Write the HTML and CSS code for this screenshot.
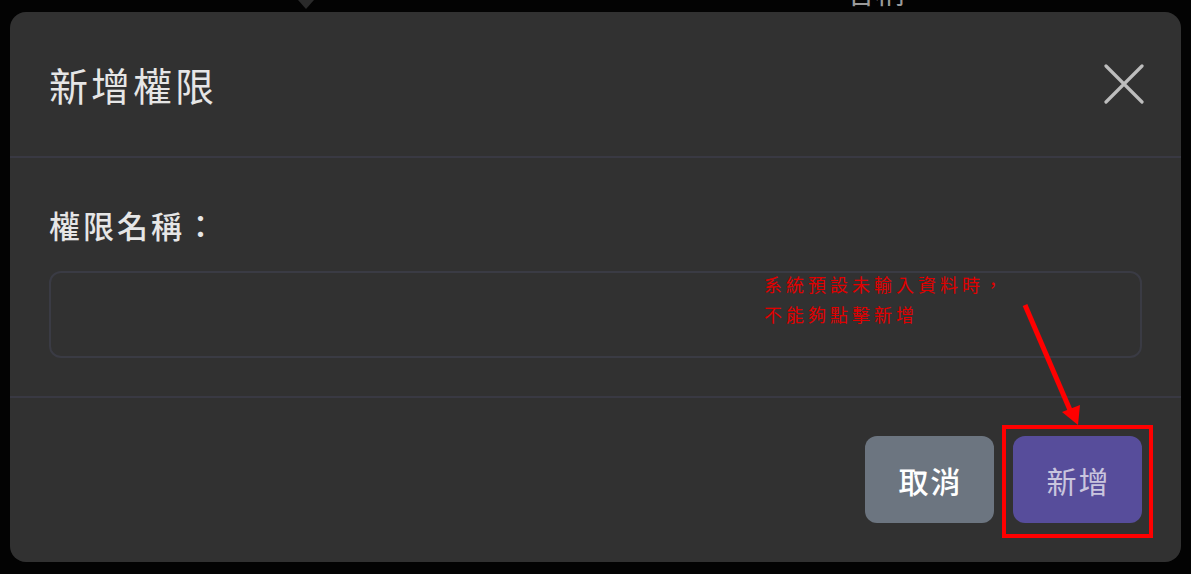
FILE: index.html
```html
<!DOCTYPE html>
<html lang="zh-Hant">
<head>
<meta charset="utf-8">
<title>新增權限</title>
<link rel="stylesheet" href="styles.css">
</head>
<body>
<div class="behind">
  <span class="behind-caret"></span>
  <span class="behind-text">名稱</span>
</div>
<div class="modal">
  <div class="modal-header">
    <h1 class="modal-title">新增權限</h1>
    <button class="close-btn" aria-label="close">
      <svg width="40" height="40" viewBox="0 0 40 40"><path d="M2 2 L38 38 M38 2 L2 38" stroke="#bdbdbd" stroke-width="3.2" stroke-linecap="round" fill="none"/></svg>
    </button>
  </div>
  <div class="modal-body">
    <label class="field-label">權限名稱：</label>
    <div class="field-input"></div>
  </div>
  <div class="modal-footer">
    <button class="btn btn-cancel">取消</button>
    <button class="btn btn-add">新增</button>
  </div>
</div>
<div class="note">系統預設未輸入資料時，<br>不能夠點擊新增</div>
<svg class="arrow" width="1191" height="574" viewBox="0 0 1191 574">
  <line x1="1025" y1="305" x2="1070" y2="410" stroke="#ff0000" stroke-width="5"/>
  <polygon points="1062,412 1080,405 1078,425" fill="#ff0000"/>
</svg>
</body>
</html>
```
FILE: styles.css
```css
html, body {
  margin: 0;
  padding: 0;
}
body {
  background: #030303;
  width: 1191px;
  height: 574px;
  overflow: hidden;
  position: relative;
  font-family: "Noto Sans CJK TC", "Noto Sans", sans-serif;
  padding: 12px 10px;
  box-sizing: border-box;
}
.behind {
  position: absolute;
  top: 0;
  left: 0;
  width: 1191px;
  height: 12px;
  overflow: hidden;
}
.behind-caret {
  position: absolute;
  left: 298px;
  top: 0;
  width: 0;
  height: 0;
  border-left: 8px solid transparent;
  border-right: 8px solid transparent;
  border-top: 9px solid #2a2a2a;
}
.behind-text {
  position: absolute;
  left: 843px;
  top: -30px;
  font-size: 30px;
  line-height: 40px;
  color: #9a9a9a;
  letter-spacing: 2px;
}
.modal {
  height: 550px;
  background: #313131;
  border-radius: 16px;
  display: flex;
  flex-direction: column;
  box-sizing: border-box;
}
.modal-header {
  height: 146px;
  display: flex;
  align-items: center;
  justify-content: space-between;
  padding: 0 37px 0 39px;
  border-bottom: 2px solid #393943;
  box-sizing: border-box;
}
.modal-title {
  margin: 0;
  font-size: 39px;
  font-weight: 400;
  letter-spacing: 3px;
  color: #e6e6e6;
  line-height: 48px;
}
.close-btn {
  background: none;
  border: 0;
  padding: 0;
  width: 40px;
  height: 40px;
  display: flex;
}
.modal-body {
  padding: 47px 39px 38px 39px;
  border-bottom: 2px solid #393943;
  display: flex;
  flex-direction: column;
  gap: 26px;
}
.field-label {
  font-size: 31px;
  line-height: 40px;
  letter-spacing: 3px;
  color: #e6e6e6;
  font-weight: 500;
}
.field-input {
  height: 87px;
  border: 2px solid #3a3b44;
  border-radius: 12px;
  box-sizing: border-box;
}
.modal-footer {
  flex: 1;
  display: flex;
  justify-content: flex-end;
  align-items: flex-start;
  gap: 19px;
  padding: 38px 39px 0 39px;
}
.btn {
  width: 129px;
  height: 87px;
  border: 0;
  border-radius: 12px;
  font-family: "Noto Sans CJK TC", "Noto Sans", sans-serif;
  font-size: 30px;
  letter-spacing: 2px;
  padding: 0 0 0 2px;
  position: relative;
}
.btn-cancel {
  background: #6c7580;
  color: #ffffff;
  font-weight: 500;
}
.btn-add {
  background: #574d9b;
  color: #c9c5de;
  font-weight: 400;
}
.btn-add::after {
  content: "";
  position: absolute;
  left: -11px;
  top: -11px;
  right: -11px;
  bottom: -15px;
  border: 4px solid #ff0000;
}
.note {
  position: absolute;
  left: 764px;
  top: 269px;
  font-size: 18px;
  line-height: 30px;
  letter-spacing: 4px;
  color: #e00000;
  font-weight: 400;
}
.arrow {
  position: absolute;
  left: 0;
  top: 0;
  pointer-events: none;
}
```
